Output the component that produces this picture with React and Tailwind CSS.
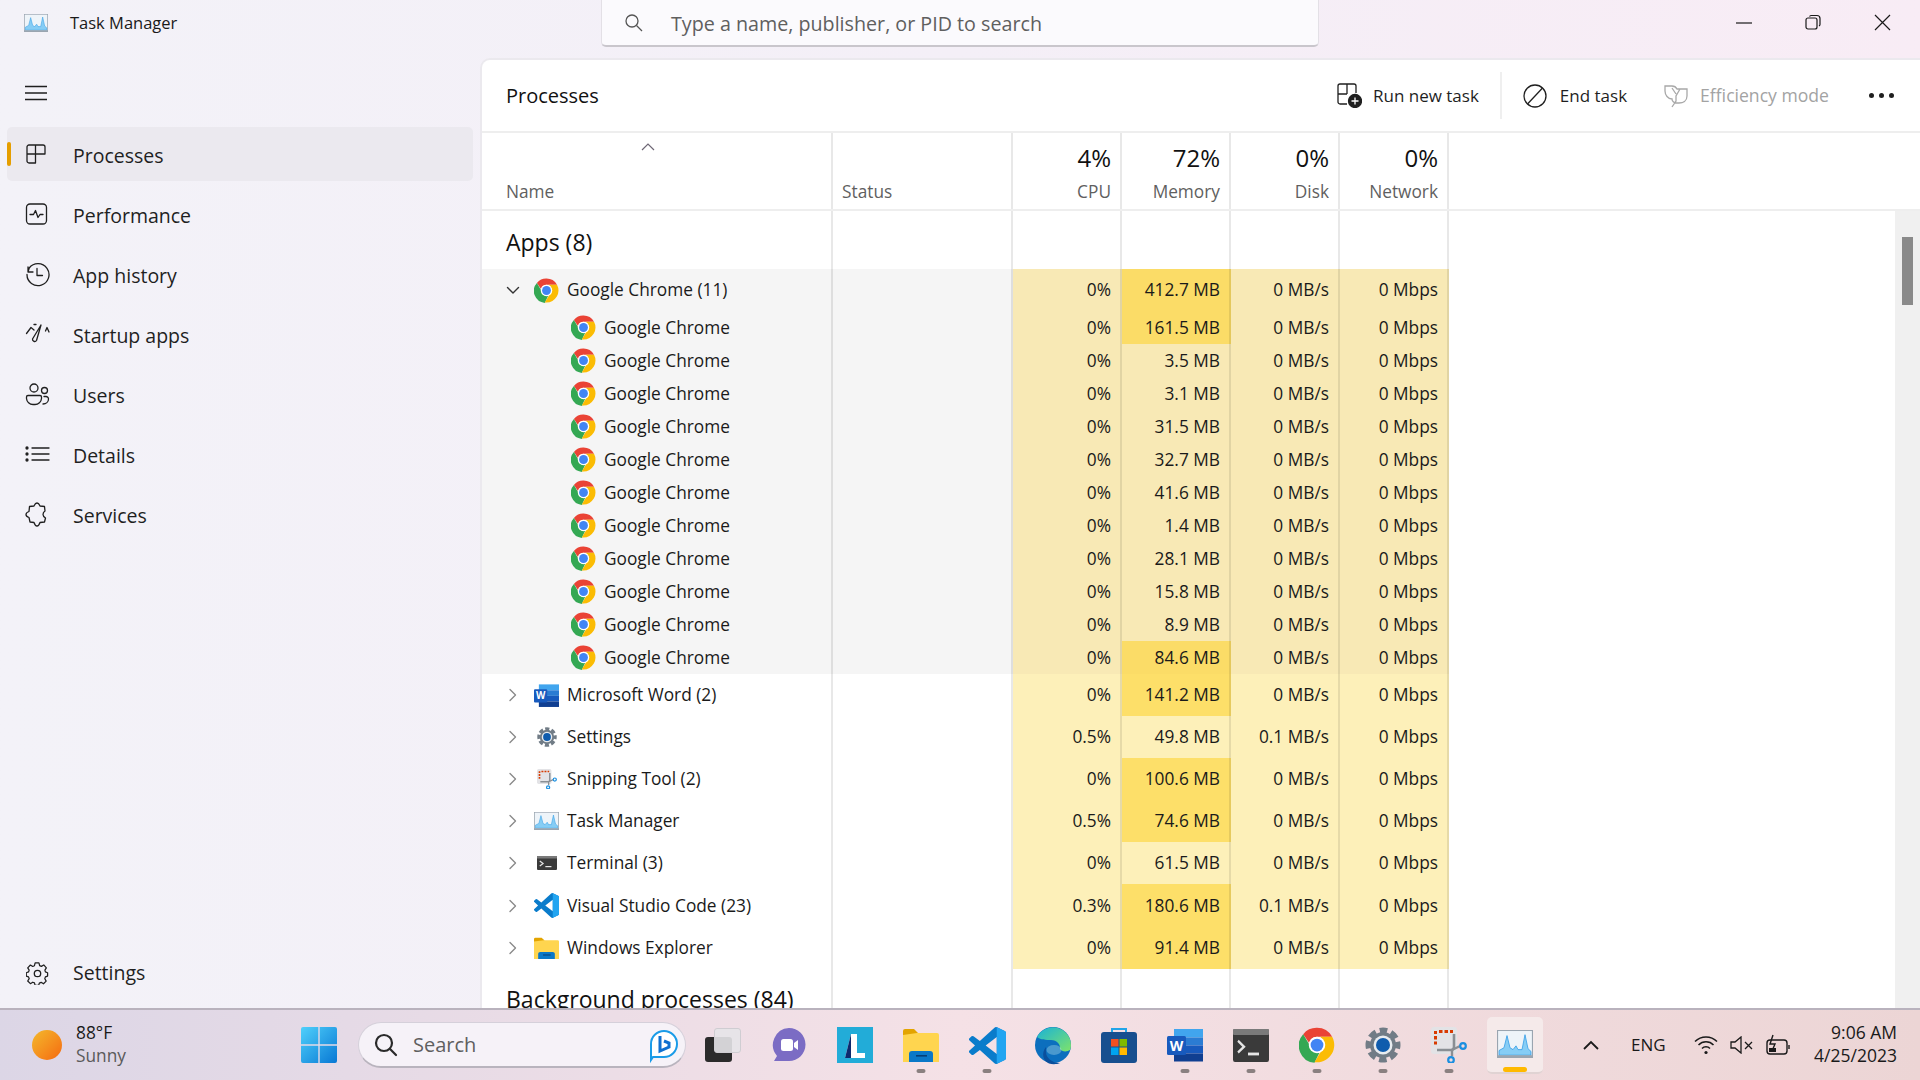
import React from "react";

const font = { fontFamily: '"Open Sans", "Noto Sans", sans-serif' };

const Line = ({ w, h, children, className = "" }) => (
  <svg width={w} height={h} viewBox={`0 0 ${w} ${h}`} fill="none" stroke="#1f1f1f" strokeWidth="1.3" strokeLinecap="round" strokeLinejoin="round" className={`shrink-0 ${className}`}>
    {children}
  </svg>
);

const Chrome = ({ s = 25 }) => (
  <svg width={s} height={s} viewBox="0 0 48 48" className="shrink-0">
    <path fill="#ea4335" d="M24 1a23 23 0 0 1 20.2 12H24a11 11 0 0 0-10.6 8L5.6 9.5A23 23 0 0 1 24 1z" />
    <path fill="#34a853" d="M5.6 9.5l10 17.2A11 11 0 0 0 27 34.6l-6.3 13.2A23 23 0 0 1 5.6 9.5z" />
    <path fill="#fbbc04" d="M44.2 13A23 23 0 0 1 24 47h-3.3l10-17A11 11 0 0 0 31.5 16L28 13z" />
    <circle cx="24" cy="24" r="11" fill="#fff" />
    <circle cx="24" cy="24" r="8.5" fill="#4285f4" />
  </svg>
);

const Word = ({ s = 30 }) => (
  <svg width={s} height={s} viewBox="0 0 36 36" className="shrink-0">
    <rect x="7" y="2" width="29" height="8.5" fill="#41a5ee" />
    <rect x="7" y="10.5" width="29" height="8" fill="#2b7cd3" />
    <rect x="7" y="18.5" width="29" height="8" fill="#185abd" />
    <rect x="7" y="26.5" width="29" height="8" fill="#103f91" />
    <rect x="0" y="9" width="19" height="19" rx="1.5" fill="#185abd" />
    <text x="9.5" y="23.5" textAnchor="middle" fontSize="14" fontWeight="700" fill="#fff" fontFamily="Open Sans">W</text>
  </svg>
);

const Gear = ({ s = 24 }) => (
  <svg width={s} height={s} viewBox="0 0 36 36" className="shrink-0">
    <circle cx="18" cy="18" r="13" fill="#717c86" />
    <circle cx="18" cy="18" r="14.5" fill="none" stroke="#717c86" strokeWidth="6" strokeDasharray="7.4 3.99" strokeDashoffset="3.7" />
    <circle cx="18" cy="18" r="9.5" fill="#e8ecef" />
    <circle cx="18" cy="18" r="7" fill="#0f5cad" />
  </svg>
);

const Snip = ({ s = 24 }) => (
  <svg width={s} height={s} viewBox="0 0 36 36" className="shrink-0">
    <rect x="0" y="0" width="26" height="27" rx="3" fill="#e3e3e6" />
    <path d="M3 4h3v3H3zM8 3h3.500v3H8zM13.500 3h3.500v3h-3.500zM19 3h3v3h-3zM3 9h3v3.500H3zM3 14.500h3v3H3z" fill="#d83b01" />
    <path d="M6 23h14a3 3 0 0 0 3-3V7" fill="none" stroke="#8a8f94" strokeWidth="2.6" />
    <path d="M21 23l8-4M21 23v6" stroke="#8a8f94" strokeWidth="2.4" fill="none" />
    <circle cx="32" cy="19" r="2.8" fill="none" stroke="#1b8fe0" strokeWidth="2.2" />
    <circle cx="20" cy="33" r="2.8" fill="none" stroke="#1b8fe0" strokeWidth="2.2" />
  </svg>
);

const TM = ({ w = 25, h = 20 }) => (
  <svg width={w} height={h} viewBox="0 0 36 30" preserveAspectRatio="none" className="shrink-0">
    <rect x="0.5" y="0.5" width="35" height="29" fill="#eef4f9" stroke="#9aa5b0" strokeWidth="1.200" />
    <path d="M2 27V22L7 19 10 6 13 19 16 21 19 17 21 21 25 21 28 5 31 20 34 23V27H2z" fill="#86cdf5" stroke="#2f9be6" strokeWidth="0.8" />
    <rect x="0" y="27" width="36" height="3" fill="#9aa5b0" />
  </svg>
);

const Term = ({ w = 24, h = 18 }) => (
  <svg width={w} height={h} viewBox="0 0 36 28" preserveAspectRatio="none" className="shrink-0">
    <rect x="0" y="0" width="36" height="28" rx="2" fill="#3a3a3a" />
    <rect x="0" y="0" width="36" height="5" rx="1" fill="#7a7a7a" />
    <path d="M5 10l6 5-6 5" fill="none" stroke="#e5e5e5" strokeWidth="2.2" />
    <rect x="15" y="20" width="11" height="2.4" fill="#e5e5e5" />
  </svg>
);

const VS = ({ s = 24 }) => (
  <svg width={s} height={s} viewBox="0 0 24 24" className="shrink-0">
    <path fill="#0a7ccb" d="M23.15 2.587L18.21.21a1.494 1.494 0 0 0-1.705.29l-9.46 8.63-4.12-3.128a.999.999 0 0 0-1.276.057L.327 7.261A1 1 0 0 0 .326 8.74L3.899 12 .326 15.26a1 1 0 0 0 .001 1.479L1.65 17.94a.999.999 0 0 0 1.276.057l4.12-3.128 9.46 8.63a1.492 1.492 0 0 0 1.704.29l4.942-2.377A1.5 1.5 0 0 0 24 20.06V3.939a1.5 1.5 0 0 0-.85-1.352zm-5.146 14.861L10.826 12l7.178-5.448v10.896z" />
    <path fill="#22a5f1" d="M18 .15l5.15 2.437A1.5 1.5 0 0 1 24 3.939V20.06a1.5 1.5 0 0 1-.85 1.353L18 23.85V.15z" />
  </svg>
);

const Folder = ({ w = 24, h = 24 }) => (
  <svg width={w} height={h} viewBox="0 0 36 34" preserveAspectRatio="none" className="shrink-0">
    <path d="M0 3a2 2 0 0 1 2-2h9l4 4v3H0z" fill="#e3a400" />
    <path d="M0 7l14-2h20a2 2 0 0 1 2 2v27H0z" fill="#ffd54f" />
    <path d="M6 34v-8a3 3 0 0 1 3-3h18a3 3 0 0 1 3 3v8z" fill="#0a78c8" />
    <rect x="13" y="27" width="11" height="1.6" fill="#053f78" />
  </svg>
);

const sideIcons = {
  Processes: (
    <Line w={22} h={22}>
      <path d="M2 4a2 2 0 0 1 2-2h6.5v18H4a2 2 0 0 1-2-2zM2 11h8.5M10.5 2H18a2 2 0 0 1 2 2v7h-9.5" />
    </Line>
  ),
  Performance: (
    <Line w={23} h={22}>
      <rect x="1.5" y="1" width="20" height="20" rx="3.5" />
      <path d="M5 11.5h3.5l2-4 2.5 7 2-3h3" />
    </Line>
  ),
  "App history": (
    <Line w={25} h={25}>
      <path d="M3 5v5h5M2 12.5A11 11 0 1 0 4.2 6L3 10M12 6.5V13.5h5.5" />
    </Line>
  ),
  "Startup apps": (
    <Line w={25} h={22}>
      <path d="M1.500 10.500L6 4.500l3 2.500M20.500 8L22 4.500l2 4.500M16 2L11.500 17.500a2.200 2.200 0 0 1-4-1.500L16 2zM9 1.500h2" />
    </Line>
  ),
  Users: (
    <Line w={25} h={23}>
      <circle cx="9" cy="5" r="4" />
      <circle cx="19.5" cy="7.5" r="3" />
      <path d="M1.5 14a1.5 1.5 0 0 1 1.5-1.5h12a1.5 1.5 0 0 1 1.5 1.5v1.5a6.5 6.5 0 0 1-6.5 6H8a6.5 6.5 0 0 1-6.5-6zM19 13.5h2a2.5 2.5 0 0 1 2.5 2.5c0 3-2.5 5-5.5 5" />
    </Line>
  ),
  Details: (
    <Line w={25} h={16}>
      <path d="M7 2h17M7 8h17M7 14h17" />
      <circle cx="2" cy="2" r="1" fill="#1f1f1f" />
      <circle cx="2" cy="8" r="1" fill="#1f1f1f" />
      <circle cx="2" cy="14" r="1" fill="#1f1f1f" />
    </Line>
  ),
  Services: (
    <Line w={24} h={25}>
      <path d="M12 1C14 1 14.500 3 15 4L19.500 4.500 20 9C18.500 10 18 11 18 12.500 18 14 19 15 20.500 16L19.500 20 15 20.500C14.500 22 14 24 12 24 10 24 9.500 22 9 20.500L5 20 4 15.500C2.500 15 1 14.500 1 12.500 1 10.500 2.500 10 4 9.500L4.500 4.500 9 4C9.500 3 10 1 12 1Z" />
    </Line>
  ),
  Settings: (
    <Line w={23} h={23}>
      <circle cx="11.500" cy="11.500" r="3.200" />
      <path d="M9.500 1.500h4l.7 2.800 1.800.8 2.500-1.500 2.700 3-1.500 2.400.5 1.900 2.300.8v3.500l-2.300.8-.6 1.900 1.400 2.500-2.800 2.800-2.400-1.500-1.900.8-.7 2.300H9.500l-.7-2.500-1.800-.7-2.400 1.500-2.800-2.800 1.500-2.500-.7-1.800-2.300-.8v-3.500l2.300-.8.7-1.900-1.500-2.400 2.800-2.900 2.400 1.500 1.800-.8z" transform="translate(0 -.5) scale(.96)" />
    </Line>
  ),
};

const Hamburger = () => (
  <svg width="22" height="16" viewBox="0 0 22 16" fill="none" stroke="#1f1f1f" strokeWidth="1.4" className="shrink-0">
    <path d="M0 1.500h22M0 8h22M0 14.500h22" />
  </svg>
);

const Chev = ({ down }) => (
  <svg width="14" height="14" viewBox="0 0 14 14" fill="none" stroke={down ? "#333" : "#8a8a8a"} strokeWidth="1.400" strokeLinecap="round" strokeLinejoin="round" className="shrink-0">
    {down ? <path d="M1.500 4.500L7 10l5.500-5.500" /> : <path d="M4 1.500L9.500 7 4 12.500" />}
  </svg>
);

const children = ["161.5", "3.5", "3.1", "31.5", "32.7", "41.6", "1.4", "28.1", "15.8", "8.9", "84.6"];
const apps = [
  ["Microsoft Word (2)", <Word s={25} />, "0%", "141.2", "0", true],
  ["Settings", <Gear s={20} />, "0.5%", "49.8", "0.1", false],
  ["Snipping Tool (2)", <Snip s={20} />, "0%", "100.6", "0", true],
  ["Task Manager", <TM w={25} h={18} />, "0.5%", "74.6", "0", true],
  ["Terminal (3)", <Term w={20} h={14} />, "0%", "61.5", "0", false],
  ["Visual Studio Code (23)", <VS s={25} />, "0.3%", "180.6", "0.1", true],
  ["Windows Explorer", <Folder w={25} h={22} />, "0%", "91.4", "0", true],
];

const grid = "grid grid-cols-[351px_180px_109px_109px_109px_109px] w-[967px]";
const cell = "border-r-2 border-black/[0.09] flex items-center";
const num = `${cell} justify-end pr-[9px] text-[17.300px] text-[#1a1a1a]`;

const DataCells = ({ cpu, mem, disk, hover, hot }) => {
  const base = hover ? "bg-[#f8e9b5]" : "bg-[#fdf0b9]";
  const memBg = hot ? (hover ? "bg-[#fbdc67]" : "bg-[#fddf69]") : base;
  return (
    <>
      <div className={`${num} ${base}`}>{cpu}</div>
      <div className={`${num} ${memBg}`}>{mem} MB</div>
      <div className={`${num} ${base}`}>{disk} MB/s</div>
      <div className={`${num} ${base}`}>0 Mbps</div>
    </>
  );
};

const Head = ({ pct, label }) => (
  <div className={`${cell} !items-end flex-col justify-between pr-[9px] pt-[9px] pb-[5px]`}>
    <span className="text-[24px] leading-[32px] text-[#111]">{pct}</span>
    <span className="text-[17.300px] leading-[24px] text-[#5f5f5f]">{label}</span>
  </div>
);

const SectionRow = ({ title, h }) => (
  <div className={`${grid} ${h}`}>
    <div className={`${cell} pl-[24px] pt-[4px] text-[23px] text-[#111]`}>{title}</div>
    <div className={cell} />
    <div className={cell} />
    <div className={cell} />
    <div className={cell} />
    <div className={cell} />
  </div>
);

const TaskIcon = ({ children, dot }) => (
  <div className="w-[66px] h-[72px] shrink-0 relative flex items-center justify-center">
    {children}
    {dot && <span className="absolute bottom-[8px] left-1/2 -translate-x-1/2 w-[9px] h-[4px] rounded-full bg-[#8a8080]" />}
  </div>
);

export default function App() {
  return (
    <div className="w-[1920px] h-[1080px] overflow-hidden flex flex-col" style={font}>
      <div className="h-[1008px] flex flex-col bg-gradient-to-r from-[#f3f2f8] via-[#f4eff7] to-[#f8ecf5] min-h-0">
        {/* title bar */}
        <div className="h-[58px] shrink-0 flex items-start">
          <div className="w-[601px] h-[46px] shrink-0 flex items-center pl-[24px] gap-[22px]">
            <TM w={24} h={18} />
            <span className="text-[16.500px] text-[#1a1a1a]">Task Manager</span>
          </div>
          <div className="w-[718px] h-[47px] shrink-0 bg-[#fbfafd] border border-t-0 border-[#e3e0e6] border-b-2 border-b-[#c9c6cc] rounded-b-[5px] flex items-center pl-[22px] gap-[28px]">
            <svg width="19" height="19" viewBox="0 0 19 19" fill="none" stroke="#555" strokeWidth="1.300" className="shrink-0">
              <circle cx="8" cy="8" r="6" />
              <path d="M12.500 12.500L18 18" />
            </svg>
            <span className="text-[19.700px] text-[#5f5f5f] pt-[3px]">Type a name, publisher, or PID to search</span>
          </div>
          <div className="flex-1 flex items-center justify-end h-[44px] pr-[29px] gap-[53px]">
            <svg width="16" height="16" viewBox="0 0 16 16" stroke="#1a1a1a" strokeWidth="1.200" fill="none"><path d="M0 9h16" /></svg>
            <svg width="16" height="16" viewBox="0 0 16 16" stroke="#1a1a1a" strokeWidth="1.200" fill="none"><rect x="1" y="4" width="11" height="11" rx="2" /><path d="M4.500 2.500A2 2 0 0 1 6 1.500h6a3 3 0 0 1 3 3v6a2 2 0 0 1-1 1.500" /></svg>
            <svg width="17" height="17" viewBox="0 0 17 17" stroke="#1a1a1a" strokeWidth="1.200" fill="none"><path d="M1 1l15 15M16 1L1 16" /></svg>
          </div>
        </div>

        <div className="flex-1 flex min-h-0">
          {/* sidebar */}
          <div className="w-[480px] shrink-0 flex flex-col px-[7px] pb-[8px]">
            <div className="h-[69px] shrink-0 flex items-center pl-[18px]"><Hamburger /></div>
            <div className="flex flex-col gap-[6px]">
              {["Processes", "Performance", "App history", "Startup apps", "Users", "Details", "Services"].map((n, i) => (
                <div key={n} className={`relative h-[54px] flex items-center rounded-[5px] ${i === 0 ? "bg-[#ebe9ef]" : ""}`}>
                  {i === 0 && <span className="absolute left-0 top-[15px] w-[4px] h-[24px] rounded-full bg-[#e59e00]" />}
                  <div className="w-[66px] pl-[18px] flex items-center shrink-0">{sideIcons[n]}</div>
                  <span className="text-[19.500px] text-[#1f1f1f] pt-[3px]">{n}</span>
                </div>
              ))}
            </div>
            <div className="mt-auto h-[54px] flex items-center">
              <div className="w-[66px] pl-[19px] flex items-center shrink-0">{sideIcons.Settings}</div>
              <span className="text-[19.500px] text-[#1f1f1f]">Settings</span>
            </div>
          </div>

          {/* panel */}
          <div className="flex-1 min-w-0 bg-white rounded-tl-[10px] border-l-2 border-t-2 border-[#ebe9ee] flex flex-col">
            <div className="h-[73px] shrink-0 border-b-2 border-[#eeeeee] flex items-center pl-[24px] pr-[26px]">
              <span className="text-[20px] font-medium text-[#111]">Processes</span>
              <div className="ml-auto flex items-center text-[17px] text-[#1f1f1f]">
                <svg width="25" height="25" viewBox="0 0 25 25" fill="none" stroke="#1f1f1f" strokeWidth="1.300" className="shrink-0">
                  <path d="M10 21H3a2 2 0 0 1-2-2V3a2 2 0 0 1 2-2h14a2 2 0 0 1 2 2v7M1 11h9M10 1v10" />
                  <circle cx="18" cy="18" r="6.500" fill="#1f1f1f" />
                  <path d="M18 14.500v7M14.500 18h7" stroke="#fff" />
                </svg>
                <span className="ml-[11px]">Run new task</span>
                <span className="w-[2px] h-[47px] bg-[#efefef] ml-[21px]" />
                <svg width="24" height="24" viewBox="0 0 24 24" fill="none" stroke="#1f1f1f" strokeWidth="1.300" className="shrink-0 ml-[21px]">
                  <circle cx="12" cy="12" r="11" />
                  <path d="M4.500 20L19.500 4" />
                </svg>
                <span className="ml-[13px]">End task</span>
                <svg width="25" height="24" viewBox="0 0 25 24" fill="none" stroke="#a8a8a8" strokeWidth="1.300" className="shrink-0 ml-[36px]">
                  <path d="M2 2h7c2 0 4 1 5 3h5c3 0 5 0 5 0v7c0 5-4 7-8 7h-3c-2 0-4-2-4-4C5 15 2 11 2 7zM9 4l4 6M17 5l-4 7v5l-4 6" />
                </svg>
                <span className="ml-[12px] text-[17.600px] text-[#a3a3a3]">Efficiency mode</span>
                <div className="ml-[40px] flex gap-[5px]">
                  <span className="w-[5px] h-[5px] rounded-full bg-[#1f1f1f]" />
                  <span className="w-[5px] h-[5px] rounded-full bg-[#1f1f1f]" />
                  <span className="w-[5px] h-[5px] rounded-full bg-[#1f1f1f]" />
                </div>
              </div>
            </div>

            <div className={`${grid} !w-full border-b-2 border-[#eeeeee] h-[78px] shrink-0`}>
              <div className={`${cell} !items-start flex-col pl-[24px] pb-[5px]`}>
                <svg width="14" height="8" viewBox="0 0 14 8" fill="none" stroke="#6e6775" strokeWidth="1.200" className="ml-[135px] mt-[10px]"><path d="M1 7l6-6 6 6" /></svg>
                <span className="mt-auto text-[17.300px] leading-[24px] text-[#5f5f5f]">Name</span>
              </div>
              <div className={`${cell} items-end pl-[9px] pb-[5px]`}>
                <span className="mt-auto text-[17.300px] leading-[24px] text-[#5f5f5f]">Status</span>
              </div>
              <Head pct="4%" label="CPU" />
              <Head pct="72%" label="Memory" />
              <Head pct="0%" label="Disk" />
              <Head pct="0%" label="Network" />
            </div>

            <div className="flex-1 min-h-0 flex overflow-hidden">
              <div className="flex-1 min-w-0 flex flex-col">
                <SectionRow title="Apps (8)" h="h-[58px] shrink-0" />
                <div className={`${grid} h-[42px] shrink-0`}>
                  <div className={`${cell} bg-[#f5f5f5] pl-[24px]`}>
                    <Chev down />
                    <span className="ml-[14px]"><Chrome s={25} /></span>
                    <span className="ml-[8px] text-[17.300px] text-[#1a1a1a]">Google Chrome (11)</span>
                  </div>
                  <div className={`${cell} bg-[#f5f5f5]`} />
                  <DataCells cpu="0%" mem="412.7" disk="0" hover hot />
                </div>
                {children.map((m, i) => (
                  <div key={i} className={`${grid} h-[33px] shrink-0`}>
                    <div className={`${cell} bg-[#f5f5f5] pl-[89px]`}>
                      <Chrome s={25} />
                      <span className="ml-[8px] text-[17.300px] text-[#1a1a1a]">Google Chrome</span>
                    </div>
                    <div className={`${cell} bg-[#f5f5f5]`} />
                    <DataCells cpu="0%" mem={m} disk="0" hover hot={m === "161.5" || m === "84.6"} />
                  </div>
                ))}
                {apps.map(([n, ic, cpu, m, d, hot]) => (
                  <div key={n} className={`${grid} h-[42.100px] shrink-0`}>
                    <div className={`${cell} pl-[24px]`}>
                      <Chev />
                      <span className="ml-[14px] w-[25px] flex items-center justify-center shrink-0">{ic}</span>
                      <span className="ml-[8px] text-[17.300px] text-[#1a1a1a]">{n}</span>
                    </div>
                    <div className={cell} />
                    <DataCells cpu={cpu} mem={m} disk={d} hot={hot} />
                  </div>
                ))}
                <SectionRow title="Background processes (84)" h="h-[58px] shrink-0" />
              </div>
              <div className="w-[25px] shrink-0 bg-[#f0f0f0] pl-[7px] pt-[26px]">
                <div className="w-[11px] h-[68px] bg-[#8a8a8a]" />
              </div>
            </div>
          </div>
        </div>
      </div>

      {/* taskbar */}
      <div className="h-[72px] shrink-0 border-t-2 border-[#b9b2bd] bg-gradient-to-r from-[#dcd6e6] via-[#f5e1e6] to-[#ecd5d5] flex items-center">
        <div className="w-[301px] shrink-0 flex items-center pl-[32px] gap-[14px]">
          <span className="w-[30px] h-[30px] rounded-full bg-gradient-to-br from-[#f2b82c] to-[#f4680f]" />
          <div className="flex flex-col text-[17.300px] leading-[23px] pb-[2px]">
            <span className="text-[#1a1a1a]">88°F</span>
            <span className="text-[#5a5a5a]">Sunny</span>
          </div>
        </div>
        <svg width="36" height="36" viewBox="0 0 36 36" className="shrink-0">
          <defs>
            <linearGradient id="w1" x1="0" y1="0" x2="1" y2="1"><stop offset="0" stopColor="#4fd0fb" /><stop offset="1" stopColor="#0878d4" /></linearGradient>
          </defs>
          <path fill="url(#w1)" d="M0 2a2 2 0 0 1 2-2h15.300v17.300H0zM18.700 0H34a2 2 0 0 1 2 2v15.300H18.700zM0 18.700h17.300V36H2a2 2 0 0 1-2-2zM18.700 18.700H36V34a2 2 0 0 1-2 2H18.700z" />
        </svg>
        <div className="ml-[21px] w-[328px] h-[46px] shrink-0 rounded-full bg-[#f6f2f8] border border-[#d5d0da] border-b-2 border-b-[#b9b4be] flex items-center pl-[15px] pr-[6px]">
          <svg width="24" height="24" viewBox="0 0 24 24" fill="none" stroke="#2a2a2a" strokeWidth="2.200" className="shrink-0">
            <circle cx="10" cy="10" r="8" />
            <path d="M15.800 15.800L22 22" strokeLinecap="round" />
          </svg>
          <span className="ml-[15px] text-[20px] text-[#5f5f5f]">Search</span>
          <svg width="30" height="40" viewBox="0 0 30 40" className="ml-auto shrink-0">
            <path d="M15 6a13 13 0 0 1 0 26H4l-2 3V19A13 13 0 0 1 15 6z" fill="#fff" stroke="#1a9be8" strokeWidth="2" />
            <path d="M11 11v15l9-4v-4l-5-2" fill="none" stroke="#0f6fd0" strokeWidth="3" />
          </svg>
        </div>
        <div className="ml-[4px] flex items-center">
          <TaskIcon>
            <div className="relative w-[36px] h-[34px]">
              <span className="absolute left-0 bottom-0 w-[27px] h-[25px] rounded-[3px] bg-[#2b2b2b]" />
              <span className="absolute right-0 top-0 w-[27px] h-[25px] rounded-[3px] bg-[#e6e4e8]/90 border border-[#cfcdd2]" />
            </div>
          </TaskIcon>
          <TaskIcon>
            <svg width="34" height="35" viewBox="0 0 34 35" className="shrink-0">
              <path d="M17 0a16.500 16.500 0 0 1 0 33H2l3-5A17 17 0 0 1 17 0z" fill="#7b6cc4" />
              <rect x="9" y="11" width="12" height="12" rx="2.500" fill="#fff" />
              <path d="M22 15l4-3v10l-4-3z" fill="#fff" />
            </svg>
          </TaskIcon>
          <TaskIcon>
            <svg width="36" height="36" viewBox="0 0 36 36" className="shrink-0">
              <rect width="36" height="36" fill="#22acd8" />
              <path d="M14 7h6v19h8v5H8z" fill="#fff" />
              <path d="M14 7l-6 24h6z" fill="#0d2a6e" />
            </svg>
          </TaskIcon>
          <TaskIcon dot><Folder w={36} h={34} /></TaskIcon>
          <TaskIcon dot><VS s={37} /></TaskIcon>
          <TaskIcon>
            <svg width="36" height="44" viewBox="0 0 36 44" className="shrink-0">
              <defs>
                <linearGradient id="e1" x1="0" y1="0" x2="1" y2="1"><stop offset="0" stopColor="#19b2d8" /><stop offset="1" stopColor="#7ee36a" /></linearGradient>
              </defs>
              <circle cx="18" cy="22" r="18" fill="#0c6fbe" />
              <path d="M2 14A18 18 0 0 1 36 22c0 2-.5 4-1 5-3 2-8 2-10-1 1-4-3-9-9-9-5 0-10 0-14-3z" fill="url(#e1)" />
              <path d="M11 29c0 6 6 11 14 11-3 1.500-8 1.500-11 .5C8 38 6 30 11 24z" fill="#0a4f9c" />
              <ellipse cx="19" cy="27" rx="7.500" ry="5" fill="#bfe8ee" opacity="0.350" />
            </svg>
          </TaskIcon>
          <TaskIcon>
            <svg width="36" height="36" viewBox="0 0 36 36" className="shrink-0">
              <path d="M11 6V2h14v4" fill="none" stroke="#22a5e8" strokeWidth="2" />
              <rect y="5" width="36" height="31" rx="3" fill="#174f8f" />
              <rect x="10" y="12" width="7.500" height="7.500" fill="#f25022" />
              <rect x="18.500" y="12" width="7.500" height="7.500" fill="#7fba00" />
              <rect x="10" y="20.500" width="7.500" height="7.500" fill="#00a4ef" />
              <rect x="18.500" y="20.500" width="7.500" height="7.500" fill="#ffb900" />
            </svg>
          </TaskIcon>
          <TaskIcon dot><Word s={36} /></TaskIcon>
          <TaskIcon dot><Term w={36} h={33} /></TaskIcon>
          <TaskIcon dot><Chrome s={36} /></TaskIcon>
          <TaskIcon dot><Gear s={36} /></TaskIcon>
          <TaskIcon dot><Snip s={36} /></TaskIcon>
          <div className="w-[56px] h-[57px] mx-[5px] shrink-0 rounded-[5px] bg-[#f5eaea] border-b-2 border-[#e0d3d3] relative flex items-center justify-center">
            <TM w={36} h={28} />
            <span className="absolute bottom-0 left-[16px] w-[24px] h-[5px] rounded-full bg-[#ffb900]" />
          </div>
        </div>
        <svg width="16" height="10" viewBox="0 0 16 10" fill="none" stroke="#1a1a1a" strokeWidth="1.800" className="ml-[35px] shrink-0"><path d="M1 9l7-7 7 7" /></svg>
        <span className="ml-[32px] text-[17px] text-[#1a1a1a]">ENG</span>
        <svg width="24" height="20" viewBox="0 0 24 20" fill="none" stroke="#1a1a1a" strokeWidth="1.500" className="ml-[28px] shrink-0">
          <path d="M1 6.500a15.500 15.500 0 0 1 22 0M4.500 10a10.500 10.500 0 0 1 15 0M8 13.500a5.500 5.500 0 0 1 8 0" />
          <circle cx="12" cy="17.500" r="1.600" fill="#1a1a1a" stroke="none" />
        </svg>
        <svg width="23" height="18" viewBox="0 0 23 18" fill="none" stroke="#1a1a1a" strokeWidth="1.300" className="ml-[12px] shrink-0">
          <path d="M1 6h4l6-5v16l-6-5H1zM15 6l7 7M22 6l-7 7" />
        </svg>
        <svg width="24" height="22" viewBox="0 0 24 22" fill="none" stroke="#1a1a1a" strokeWidth="1.400" className="ml-[13px] shrink-0">
          <rect x="1" y="6" width="20" height="14" rx="3" />
          <path d="M23 11v4M7 1L4 10h5l-3 7" />
          <rect x="3" y="14" width="7" height="4" fill="#1a1a1a" stroke="none" />
        </svg>
        <div className="ml-auto pr-[23px] pb-[3px] flex flex-col items-end text-[17.500px] leading-[23px] text-[#1a1a1a]">
          <span>9:06 AM</span>
          <span>4/25/2023</span>
        </div>
      </div>
    </div>
  );
}
